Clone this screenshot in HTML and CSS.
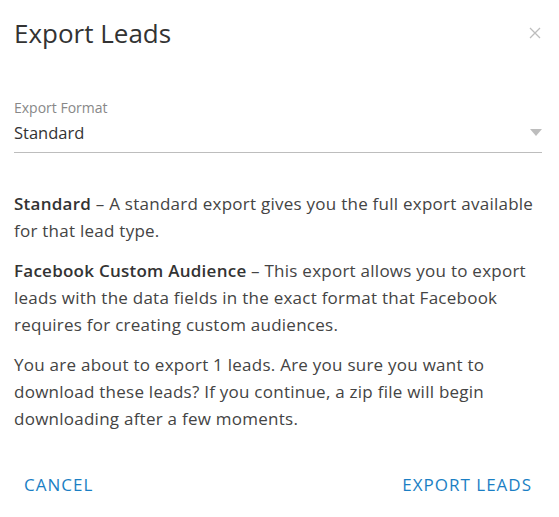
FILE: index.html
```html
<!DOCTYPE html>
<html lang="en">
<head>
  <meta charset="UTF-8" />
  <title>Export Leads</title>
  <link rel="stylesheet" href="styles.css">
</head>
<body>
  <div class="dialog">
    <header class="dialog-header">
      <h1>Export Leads</h1>
      <button class="close" aria-label="Close">
        <svg width="12" height="12" viewBox="0 0 12 12"><path d="M1 1L11 11M11 1L1 11" stroke="#bdbdbd" stroke-width="1.3" fill="none"/></svg>
      </button>
    </header>

    <div class="field">
      <label>Export Format</label>
      <div class="select">
        <span>Standard</span>
        <svg width="12" height="7" viewBox="0 0 12 7"><path d="M0 0H12L6 7Z" fill="#bdbdbd"/></svg>
      </div>
    </div>

    <div class="content">
      <p><strong>Standard</strong> – A standard export gives you the full export available for that lead type.</p>
      <p><strong>Facebook Custom Audience</strong> – This export allows you to export leads with the data fields in the exact format that Facebook requires for creating custom audiences.</p>
      <p>You are about to export 1 leads. Are you sure you want to download these leads? If you continue, a zip file will begin downloading after a few moments.</p>
    </div>

    <footer class="actions">
      <button class="btn">Cancel</button>
      <button class="btn">Export Leads</button>
    </footer>
  </div>
</body>
</html>
```

FILE: styles.css
```css
* {
  box-sizing: border-box;
}

body, html {
  margin: 0;
  padding: 0;
  background: #fff;
  font-family: 'Open Sans', sans-serif;
  color: #333;
}

.dialog {
  width: 559px;
  padding: 16px 17px 0 14px;
}

.dialog-header {
  display: flex;
  justify-content: space-between;
  align-items: center;
  height: 34px;
}

.dialog-header h1 {
  margin: 0;
  font-size: 26px;
  font-weight: 400;
  color: #333;
}

.close {
  border: none;
  background: none;
  padding: 0;
  margin-right: 1px;
  display: flex;
}

.field {
  margin-top: 49px;
}

.field label {
  display: block;
  font-size: 14px;
  color: #888;
  line-height: 18px;
}

.select {
  display: flex;
  justify-content: space-between;
  align-items: center;
  height: 36px;
  padding-bottom: 5px;
  border-bottom: 1px solid #bdbdbd;
  font-size: 16.5px;
  color: #333;
}

.content {
  margin-top: 37px;
  font-size: 17px;
  line-height: 27px;
  letter-spacing: 0.25px;
  color: #444;
}

.content p {
  margin: 0 0 13px;
}

.content strong {
  font-weight: 600;
  color: #333;
}

.actions {
  display: flex;
  justify-content: space-between;
  margin-top: 35px;
}

.btn {
  border: none;
  background: none;
  padding: 6px 10px;
  font-family: inherit;
  font-size: 17px;
  letter-spacing: 1px;
  text-transform: uppercase;
  color: #1b7fc4;
  cursor: pointer;
}
```
